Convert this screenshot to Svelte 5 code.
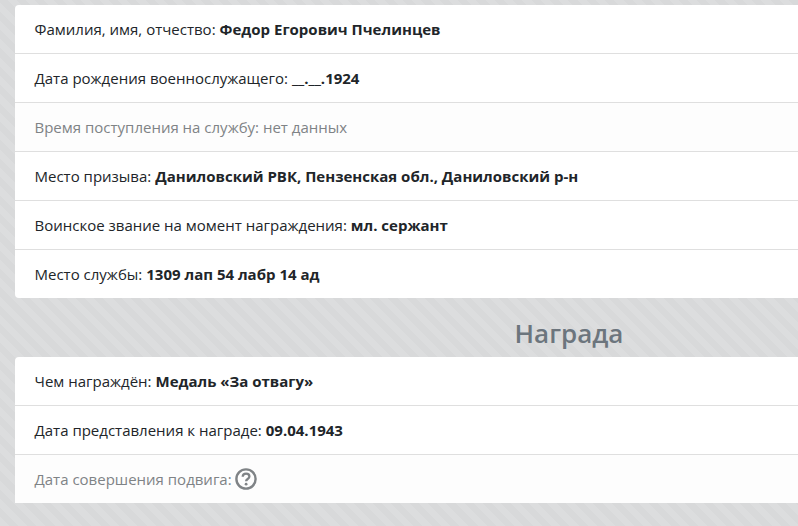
<script>
  const personal = [
    { label: "Фамилия, имя, отчество:", value: "Федор Егорович Пчелинцев" },
    { label: "Дата рождения военнослужащего:", value: "__.__.1924" },
    { label: "Время поступления на службу: нет данных", muted: true },
    { label: "Место призыва:", value: "Даниловский РВК, Пензенская обл., Даниловский р-н" },
    { label: "Воинское звание на момент награждения:", value: "мл. сержант" },
    { label: "Место службы:", value: "1309 лап 54 лабр 14 ад" }
  ];

  const award = [
    { label: "Чем награждён:", value: "Медаль «За отвагу»" },
    { label: "Дата представления к награде:", value: "09.04.1943" },
    { label: "Дата совершения подвига:", muted: true, help: true }
  ];
</script>

{#snippet card(rows)}
  <ul class="card">
    {#each rows as row}
      <li class:muted={row.muted}>
        {row.label}
        {#if row.value}<b>{row.value}</b>{/if}
        {#if row.help}
          <svg class="help" viewBox="0 0 22 22" width="22" height="22" aria-hidden="true">
            <circle cx="11" cy="11" r="9.6" fill="none" stroke="currentColor" stroke-width="2.4" />
            <path d="M7.7 8.8c.1-2 1.5-3.1 3.4-3.1 2 0 3.3 1.2 3.3 2.8 0 2.5-3.3 2.4-3.3 4.7" fill="none" stroke="currentColor" stroke-width="2.3" />
            <circle cx="11.1" cy="16.2" r="1.4" fill="currentColor" />
          </svg>
        {/if}
      </li>
    {/each}
  </ul>
{/snippet}

<main class="page">
  {@render card(personal)}
  <h2>Награда</h2>
  {@render card(award)}
</main>

<style>
  :global(body) {
    overflow: hidden;
    height: 526px;
    background: repeating-linear-gradient(45deg, #dcddde 0 6.5px, #d8d9da 6.5px 13px);
  }

  .page {
    width: 1108px;
    padding: 5px 15px 0;
    font-family: "Open Sans", "Noto Sans", sans-serif;
    font-size: 15px;
    color: #212529;
  }

  .card {
    margin: 0;
    padding: 0;
    list-style: none;
    background: #fff;
    border-radius: 4px;
  }

  li {
    display: flex;
    align-items: center;
    gap: 4px;
    height: 48px;
    padding: 0 19.5px;
    border-bottom: 1px solid #dfdfdf;
  }

  li:last-child {
    border-bottom: 0;
  }

  li.muted {
    color: #7f8386;
    background: #fdfdfd;
  }

  b {
    font-weight: 700;
  }

  .help {
    margin-left: -1px;
  }

  h2 {
    margin: 0;
    height: 59px;
    line-height: 70px;
    text-align: center;
    font-size: 26px;
    font-weight: 600;
    color: #6c757d;
  }
</style>
